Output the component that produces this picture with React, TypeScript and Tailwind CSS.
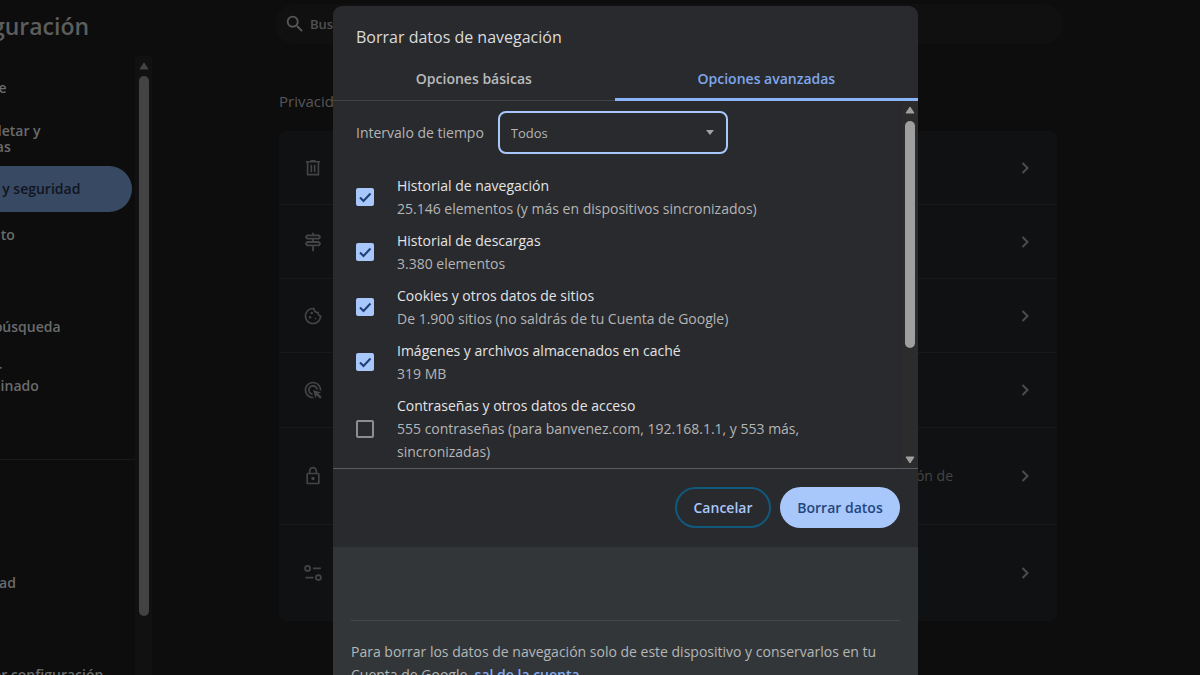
import { useId, useState } from "react";
import type { ReactNode } from "react";
import { MdAdsClick, MdOutlineCookie, MdOutlineLock, MdSearch } from "react-icons/md";

function TrashIcon() {
  return (
    <svg viewBox="0 0 24 24" className="size-5" fill="none" stroke="currentColor" strokeWidth="2">
      <path d="M3.500 4.500h17M9 3.500h6M5.500 5v15h13V5M10 8v9M14 8v9" />
    </svg>
  );
}

function SignpostIcon() {
  return (
    <svg viewBox="0 0 24 24" className="size-5" fill="none" stroke="currentColor" strokeWidth="2.200" strokeLinejoin="round">
      <path d="M12 1V4M12 8v4M12 16v7M5 4h14l1.500 2-1.500 2H5L3.500 6zM19 12H5l-1.500 2L5 16h14l1.500-2z" />
    </svg>
  );
}

function TuneIcon() {
  return (
    <svg viewBox="0 0 24 24" className="size-5" fill="none" stroke="currentColor" strokeWidth="2">
      <circle cx="5.500" cy="6.500" r="3" />
      <path d="M12 6.500h9.500M3 17.500h9.500" />
      <circle cx="18.500" cy="17.500" r="3" />
    </svg>
  );
}

function Chevron() {
  return (
    <svg viewBox="0 0 8 12" className="h-3 w-2 text-[#4b4c4d]" fill="none" stroke="currentColor" strokeWidth="2">
      <path d="M1.500 1l5 5-5 5" />
    </svg>
  );
}

function Arrow({ down = false }: { down?: boolean }) {
  return (
    <svg viewBox="0 0 10 8" className="h-2 w-2.5 shrink-0" fill="currentColor" stroke="currentColor" strokeLinejoin="round">
      <path d={down ? "M1 1h8L5 7z" : "M1 7h8L5 1z"} />
    </svg>
  );
}

type NavEntry = { label: string; active?: boolean; tall?: boolean };

const mainNav: NavEntry[] = [
  { label: "Tú y Google" },
  { label: "Autocompletar y contraseñas", tall: true },
  { label: "Privacidad y seguridad", active: true },
  { label: "Rendimiento" },
  { label: "Diseño" },
  { label: "Motor de búsqueda" },
  { label: "Navegador predeterminado", tall: true },
  { label: "Al iniciar" },
];

const moreNav: NavEntry[] = [
  { label: "Idiomas" },
  { label: "Descargas" },
  { label: "Accesibilidad" },
  { label: "Sistema" },
  { label: "Restablecer configuración" },
];

function NavItem({ label, active, tall }: NavEntry) {
  return (
    <a
      href="#"
      className={`flex shrink-0 items-center rounded-r-full text-sm leading-4 font-semibold ${
        tall ? "h-[55px] pr-20" : "h-[46px] whitespace-nowrap"
      } ${active ? "bg-[#384964] text-[#10151e]" : "text-[#6a6b6c]"}`}
    >
      {label}
    </a>
  );
}

const cardRows: { icon: ReactNode; text?: string; height: string }[] = [
  { icon: <TrashIcon />, height: "h-[74px]" },
  { icon: <SignpostIcon />, height: "h-[74px]" },
  { icon: <MdOutlineCookie className="size-5" />, height: "h-[74px]" },
  { icon: <MdAdsClick className="size-5" />, height: "h-[75px]" },
  { icon: <MdOutlineLock className="size-5" />, text: "ón de", height: "h-[97px]" },
  { icon: <TuneIcon />, height: "h-[96px]" },
];

const dataTypes = [
  { title: "Historial de navegación", detail: "25.146 elementos (y más en dispositivos sincronizados)", on: true },
  { title: "Historial de descargas", detail: "3.380 elementos", on: true },
  { title: "Cookies y otros datos de sitios", detail: "De 1.900 sitios (no saldrás de tu Cuenta de Google)", on: true },
  { title: "Imágenes y archivos almacenados en caché", detail: "319 MB", on: true },
  {
    title: "Contraseñas y otros datos de acceso",
    detail: "555 contraseñas (para banvenez.com, 192.168.1.1, y 553 más, sincronizadas)",
    on: false,
  },
];

function DataOption({ title, detail, on }: { title: string; detail: string; on: boolean }) {
  const id = useId();
  const [checked, setChecked] = useState(on);
  return (
    <div className="flex items-center gap-[23px]">
      <span className="grid size-[18px] shrink-0">
        <input
          id={id}
          type="checkbox"
          checked={checked}
          onChange={() => setChecked(!checked)}
          className="col-start-1 row-start-1 size-[18px] appearance-none rounded-xs border-2 border-[#8d8e8e] checked:border-[#a8c7fa] checked:bg-[#a8c7fa]"
        />
        {checked && (
          <svg
            viewBox="0 0 18 18"
            className="pointer-events-none col-start-1 row-start-1 text-[#1d4078]"
            fill="none"
            stroke="currentColor"
            strokeWidth="2"
          >
            <path d="M4 9.500l3.500 3.500L14.500 5.500" />
          </svg>
        )}
      </span>
      <label htmlFor={id} className="text-sm leading-[23px] text-[#b4b5b6]">
        <span className="block font-medium text-[#e3e4e5]">{title}</span>
        <span className="block">{detail}</span>
      </label>
    </div>
  );
}

function ClearDataDialog() {
  const rangeId = useId();
  return (
    <div
      role="dialog"
      aria-labelledby="dialog-title"
      className="flex w-[585px] flex-col self-start overflow-hidden rounded-t-[9px] bg-[#292a2d] text-sm"
    >
      <h2 id="dialog-title" className="px-[23px] pt-[19px] text-base leading-6 font-medium text-[#dadbdc]">
        Borrar datos de navegación
      </h2>
      <div role="tablist" className="mt-[5px] flex border-b border-[#424346] font-semibold">
        <button role="tab" aria-selected="false" className="h-[46px] flex-auto pt-[3px] text-[#b9babb]">
          Opciones básicas
        </button>
        <button
          role="tab"
          aria-selected="true"
          className="-mb-px h-[47px] flex-auto border-b-3 border-[#8ab4f8] pt-[5px] text-[#7fa7ea]"
        >
          Opciones avanzadas
        </button>
      </div>

      <div className="flex h-[367px]">
        <div className="flex flex-1 flex-col overflow-hidden pt-2.5 pl-[23px]">
          <div className="flex items-center gap-3.5 text-[#b4b5b6]">
            <label htmlFor={rangeId}>Intervalo de tiempo</label>
            <div className="grid w-[230px] items-center">
              <select
                id={rangeId}
                className="col-start-1 row-start-1 h-[43px] appearance-none rounded-lg border-2 border-[#a8c7fa] bg-transparent px-[11px] pt-0.5 text-[13px] outline-none"
              >
                <option>Todos</option>
              </select>
              <svg
                viewBox="0 0 8 5"
                className="pointer-events-none col-start-1 row-start-1 mr-3.5 h-[5px] w-2 justify-self-end"
                fill="#a2a3a4"
              >
                <path d="M0 0h8L4 5z" />
              </svg>
            </div>
          </div>
          <div className="mt-5 flex flex-col gap-[9px] pr-20">
            {dataTypes.map((item) => (
              <DataOption key={item.title} {...item} />
            ))}
          </div>
        </div>
        <div className="flex w-4 flex-col items-center bg-[#2c2c2c] pt-[5px] pb-1 text-[#9f9f9f]">
          <Arrow />
          <div className="mt-[7px] h-[227px] w-2.5 rounded-full bg-current" />
          <div className="flex-1" />
          <Arrow down />
        </div>
      </div>

      <div className="flex justify-end gap-[9px] border-t border-[#5b5c5f] px-[18px] pt-[18px] pb-[19px] font-semibold">
        <button className="h-[41px] w-24 rounded-full border-2 border-[#10597c] text-[#a8c7fa]">Cancelar</button>
        <button className="h-[41px] w-[120px] rounded-full bg-[#a8c7fa] text-[#23467f]">Borrar datos</button>
      </div>

      <div className="bg-[#323639] px-[18px] pt-[73px]">
        <p className="border-t border-[#45494c] pt-[19px] pb-4 leading-[23px] text-[#b4b6b7]">
          Para borrar los datos de navegación solo de este dispositivo y conservarlos en tu Cuenta de Google,{" "}
          <a href="#" className="font-semibold text-[#85aef2]">
            sal de la cuenta
          </a>
        </p>
      </div>
    </div>
  );
}

export default function App() {
  return (
    <div className="relative flex h-screen overflow-hidden bg-[#0d0d0d] font-['Open_Sans','Noto_Sans',sans-serif]">
      <aside className="-ml-18 flex w-56 shrink-0 flex-col">
        <h1 className="h-14 shrink-0 pt-2 pl-1.5 text-[23px] leading-9 font-semibold text-[#5c5d5d]">Configuración</h1>
        <div className="flex min-h-0 flex-1">
          <nav className="flex flex-1 flex-col overflow-hidden pt-[9px]">
            <div className="flex flex-col pr-[3px]">
              {mainNav.map((item) => (
                <NavItem key={item.label} {...item} />
              ))}
            </div>
            <div className="mt-2 flex flex-col border-t border-[#1a1a1a] pt-2">
              {moreNav.map((item) => (
                <NavItem key={item.label} {...item} />
              ))}
            </div>
          </nav>
          <div className="flex w-[17px] flex-col items-center bg-[#111111] pt-1.5 text-[#434343]">
            <Arrow />
            <div className="mt-1.5 h-[540px] w-2.5 shrink-0 rounded-full bg-current" />
          </div>
        </div>
      </aside>

      <main className="flex flex-1 flex-col pr-[137px] pl-[123px] text-[#565758]">
        <label className="mt-1 flex h-10 items-center gap-1 rounded-full bg-[#101010] pl-[9px] text-[13px] font-semibold">
          <MdSearch className="size-[22px]" />
          <input
            type="search"
            placeholder="Buscar"
            aria-label="Buscar"
            className="flex-1 bg-transparent pt-0.5 outline-none placeholder:text-[#505151]"
          />
        </label>
        <div className="pr-1.5 pl-1">
          <h2 className="mt-[45px] text-[15px] leading-6">Privacidad y seguridad</h2>
          <div className="mt-[18px] divide-y divide-[#18191a] rounded-lg bg-[#101113]">
            {cardRows.map((row, i) => (
              <div key={i} className={`flex items-center pr-7 pl-6 text-[#444546] ${row.height}`}>
                {row.icon}
                <span className="flex-1 pr-[68px] text-right text-sm">{row.text}</span>
                <Chevron />
              </div>
            ))}
          </div>
        </div>
      </main>

      <div className="absolute inset-0 flex justify-center pt-1.5 pl-[51px]">
        <ClearDataDialog />
      </div>
    </div>
  );
}
